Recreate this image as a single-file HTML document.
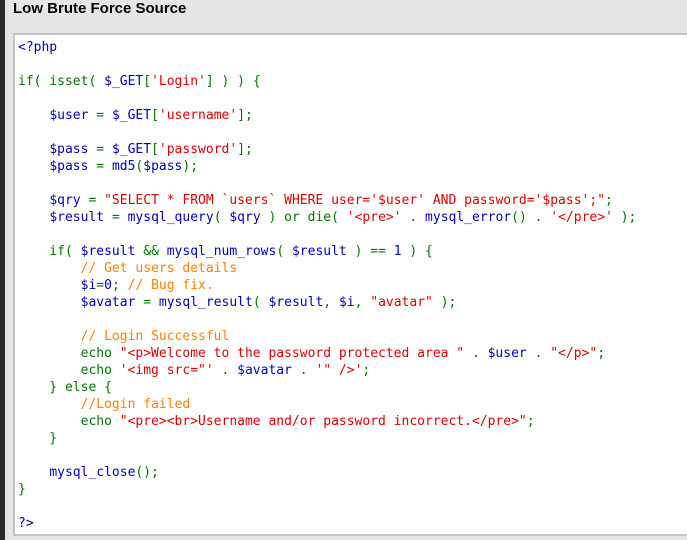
<!DOCTYPE html>
<html><head><meta charset="utf-8"><style>
html,body{margin:0;padding:0;width:687px;height:540px;overflow:hidden;background:#e6e6e6;}
.strip{position:absolute;left:0;top:0;width:5px;height:540px;background:#2b2b2b;}
h1{position:absolute;left:13px;top:0px;margin:0;font:bold 15px "Liberation Sans",sans-serif;color:#000;}
.box{position:absolute;left:13px;top:33px;width:680px;height:503px;background:#fff;border:2px solid #c4c4c4;box-sizing:border-box;}
pre{position:absolute;left:3px;top:4px;margin:0;font:13px/17px "DejaVu Sans Mono",monospace;color:#007700;}
.b{color:#0000BB}.r{color:#DD0000}.o{color:#FF8000}
</style></head><body>
<div class="strip"></div>
<h1>Low Brute Force Source</h1>
<div class="box"><pre><span class="b">&lt;?php</span>

if( isset( <span class="b">$_GET</span>[<span class="r">'Login'</span>] ) ) {

    <span class="b">$user </span>= <span class="b">$_GET</span>[<span class="r">'username'</span>];

    <span class="b">$pass </span>= <span class="b">$_GET</span>[<span class="r">'password'</span>];
    <span class="b">$pass </span>= <span class="b">md5</span>(<span class="b">$pass</span>);

    <span class="b">$qry </span>= <span class="r">"SELECT * FROM `users` WHERE user='$user' AND password='$pass';"</span>;
    <span class="b">$result </span>= <span class="b">mysql_query</span>( <span class="b">$qry </span>) or die( <span class="r">'&lt;pre&gt;' </span>. <span class="b">mysql_error</span>() . <span class="r">'&lt;/pre&gt;' </span>);

    if( <span class="b">$result </span>&amp;&amp; <span class="b">mysql_num_rows</span>( <span class="b">$result </span>) == <span class="b">1 </span>) {
        <span class="o">// Get users details</span>
        <span class="b">$i</span>=<span class="b">0</span>; <span class="o">// Bug fix.</span>
        <span class="b">$avatar </span>= <span class="b">mysql_result</span>( <span class="b">$result</span>, <span class="b">$i</span>, <span class="r">"avatar" </span>);

        <span class="o">// Login Successful</span>
        echo <span class="r">"&lt;p&gt;Welcome to the password protected area " </span>. <span class="b">$user </span>. <span class="r">"&lt;/p&gt;"</span>;
        echo <span class="r">'&lt;img src="' </span>. <span class="b">$avatar </span>. <span class="r">'" /&gt;'</span>;
    } else {
        <span class="o">//Login failed</span>
        echo <span class="r">"&lt;pre&gt;&lt;br&gt;Username and/or password incorrect.&lt;/pre&gt;"</span>;
    }

    <span class="b">mysql_close</span>();
}

<span class="b">?&gt;</span></pre></div>
</body></html>
